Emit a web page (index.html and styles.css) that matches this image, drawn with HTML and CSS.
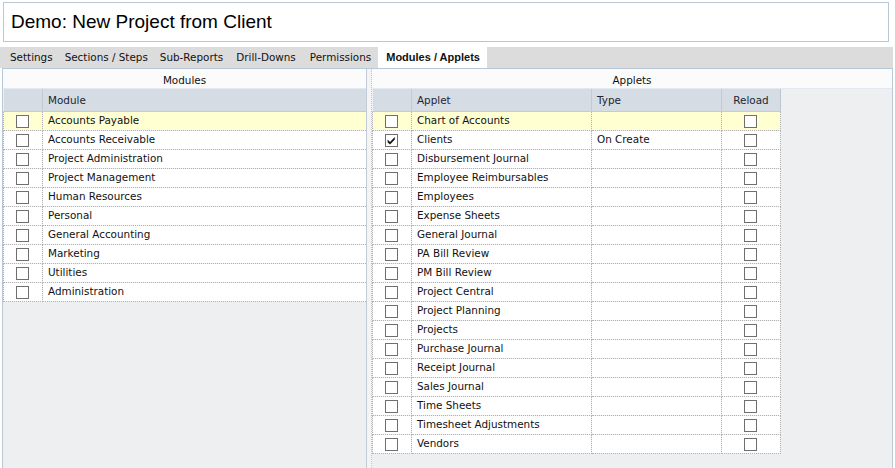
FILE: index.html
```html
<!DOCTYPE html>
<html>
<head>
<meta charset="utf-8">
<link rel="stylesheet" href="styles.css">
</head>
<body>
<div class="title">Demo: New Project from Client</div>
<div class="tabs">
  <div class="tab">Settings</div>
  <div class="tab">Sections / Steps</div>
  <div class="tab">Sub-Reports</div>
  <div class="tab">Drill-Downs</div>
  <div class="tab">Permissions</div>
  <div class="tab active">Modules / Applets</div>
</div>
<div class="panels">
  <div class="panel left">
    <div class="phead">Modules</div>
    <table class="grid">
      <colgroup><col class="c-chk"><col></colgroup>
      <thead><tr><th></th><th class="txt">Module</th></tr></thead>
      <tbody>
        <tr class="sel"><td class="chk"><span class="box"></span></td><td>Accounts Payable</td></tr>
        <tr><td class="chk"><span class="box"></span></td><td>Accounts Receivable</td></tr>
        <tr><td class="chk"><span class="box"></span></td><td>Project Administration</td></tr>
        <tr><td class="chk"><span class="box"></span></td><td>Project Management</td></tr>
        <tr><td class="chk"><span class="box"></span></td><td>Human Resources</td></tr>
        <tr><td class="chk"><span class="box"></span></td><td>Personal</td></tr>
        <tr><td class="chk"><span class="box"></span></td><td>General Accounting</td></tr>
        <tr><td class="chk"><span class="box"></span></td><td>Marketing</td></tr>
        <tr><td class="chk"><span class="box"></span></td><td>Utilities</td></tr>
        <tr><td class="chk"><span class="box"></span></td><td>Administration</td></tr>
      </tbody>
    </table>
  </div>
  <div class="split"></div>
  <div class="panel right">
    <div class="phead">Applets</div>
    <table class="grid applets">
      <colgroup><col class="c-chk"><col class="c-app"><col class="c-type"><col class="c-rel"></colgroup>
      <thead><tr><th></th><th class="txt">Applet</th><th class="txt">Type</th><th>Reload</th></tr></thead>
      <tbody>
        <tr class="sel"><td class="chk"><span class="box"></span></td><td>Chart of Accounts</td><td></td><td class="chk"><span class="box"></span></td></tr>
        <tr><td class="chk"><span class="box"><svg viewBox="0 0 13 13" width="13" height="13"><path d="M2.6 5.6 L5 8 L9.8 3 L9.8 5.6 L5 10.6 L2.6 8.2 Z" fill="#111"/></svg></span></td><td>Clients</td><td>On Create</td><td class="chk"><span class="box"></span></td></tr>
        <tr><td class="chk"><span class="box"></span></td><td>Disbursement Journal</td><td></td><td class="chk"><span class="box"></span></td></tr>
        <tr><td class="chk"><span class="box"></span></td><td>Employee Reimbursables</td><td></td><td class="chk"><span class="box"></span></td></tr>
        <tr><td class="chk"><span class="box"></span></td><td>Employees</td><td></td><td class="chk"><span class="box"></span></td></tr>
        <tr><td class="chk"><span class="box"></span></td><td>Expense Sheets</td><td></td><td class="chk"><span class="box"></span></td></tr>
        <tr><td class="chk"><span class="box"></span></td><td>General Journal</td><td></td><td class="chk"><span class="box"></span></td></tr>
        <tr><td class="chk"><span class="box"></span></td><td>PA Bill Review</td><td></td><td class="chk"><span class="box"></span></td></tr>
        <tr><td class="chk"><span class="box"></span></td><td>PM Bill Review</td><td></td><td class="chk"><span class="box"></span></td></tr>
        <tr><td class="chk"><span class="box"></span></td><td>Project Central</td><td></td><td class="chk"><span class="box"></span></td></tr>
        <tr><td class="chk"><span class="box"></span></td><td>Project Planning</td><td></td><td class="chk"><span class="box"></span></td></tr>
        <tr><td class="chk"><span class="box"></span></td><td>Projects</td><td></td><td class="chk"><span class="box"></span></td></tr>
        <tr><td class="chk"><span class="box"></span></td><td>Purchase Journal</td><td></td><td class="chk"><span class="box"></span></td></tr>
        <tr><td class="chk"><span class="box"></span></td><td>Receipt Journal</td><td></td><td class="chk"><span class="box"></span></td></tr>
        <tr><td class="chk"><span class="box"></span></td><td>Sales Journal</td><td></td><td class="chk"><span class="box"></span></td></tr>
        <tr><td class="chk"><span class="box"></span></td><td>Time Sheets</td><td></td><td class="chk"><span class="box"></span></td></tr>
        <tr><td class="chk"><span class="box"></span></td><td>Timesheet Adjustments</td><td></td><td class="chk"><span class="box"></span></td></tr>
        <tr><td class="chk"><span class="box"></span></td><td>Vendors</td><td></td><td class="chk"><span class="box"></span></td></tr>
      </tbody>
    </table>
  </div>
</div>
</body>
</html>
```

FILE: styles.css
```css
* { box-sizing: border-box; }
html, body { margin: 0; padding: 0; background: #fff; overflow: hidden; }
body {
  width: 895px; height: 468px;
  font-family: "DejaVu Sans", "Liberation Sans", sans-serif;
  font-size: 11px; color: #111;
}
.title {
  margin: 2px 6px 0 3px;
  height: 40px;
  border: 1px solid #b9c7d5;
  font-family: "Liberation Sans", Arial, sans-serif;
  font-size: 19px;
  line-height: 38px;
  padding-left: 7px;
  color: #000;
}
.tabs {
  margin-top: 5px;
  width: 893px;
  height: 21px;
  background: #dcdcdc;
  display: flex;
  padding-left: 4px;
  font-family: "DejaVu Sans", sans-serif;
  font-size: 10.4px;
}
.tab {
  padding: 0 6px;
  line-height: 21px;
  color: #111;
}
.tab:nth-child(4), .tab:nth-child(5) { padding: 0 7px; }
.tab.active {
  background: #fff;
  font-weight: bold;
  font-family: "Liberation Sans", Arial, sans-serif;
  font-size: 11px;
  padding: 0 7px 0 8px;
  margin-left: 0;
}
.panels {
  margin-left: 2px;
  width: 891px;
  height: 400px;
  border: 1px solid #b8c8d8;
  border-bottom: none;
  display: flex;
  background: #eeeff1;
}
.panel { display: flex; flex-direction: column; }
.left { width: 364px; border-right: 1px solid #c3ccd6; }
.split { width: 5px; background: #f4f4f4; border-right: 1px dotted #b8c8dc; }
.right { flex: 1; }
.phead {
  height: 20px;
  line-height: 18px;
  padding-top: 2px;
  text-align: center;
  background: #fbfbfb;
  border-bottom: 1px solid #e2e9f2;
  font-size: 10.4px;
}
.grid {
  border-collapse: collapse;
  table-layout: fixed;
  font-size: 10.4px;
}
.left .grid { width: 363px; }
.applets { width: 408px; }
.c-chk { width: 39px; }
.c-app { width: 180px; }
.c-type { width: 130px; }
.c-rel { width: 59px; }
.grid th {
  height: 22px;
  background: #d5dce3;
  font-weight: normal;
  color: #1b2633;
  border-right: 1px solid #c2cad3;
  border-bottom: 1px solid #c3cbd3;
  padding: 1px 0 0 0;
  text-align: center;
}
.grid th:last-child { border-right: 1px solid #bdc5ce; }
.left .grid th:last-child { border-right: none; }
.grid th.txt { text-align: left; padding-left: 5px; }
.grid td {
  height: 19px;
  padding: 0 0 0 5px;
  background: #fff;
  border-right: 1px dotted #b4b4b4;
  border-bottom: 1px dotted #b4b4b4;
  white-space: nowrap;
  overflow: hidden;
  line-height: 17px;
}
.grid td:first-child { border-left: 1px dotted #b4b4b4; }
.left .grid td:last-child { border-right: none; }
.grid tr.sel td { background: #ffffd2; }
.grid td.chk { padding: 0; text-align: center; }
.box {
  display: inline-block;
  width: 13px; height: 13px;
  border: 1px solid #6f6f6f;
  background: #fff;
  vertical-align: middle;
  position: relative;
  margin-top: 1px;
  margin-left: -1px;
}
.box svg { position: absolute; left: -1px; top: -1px; }
```
